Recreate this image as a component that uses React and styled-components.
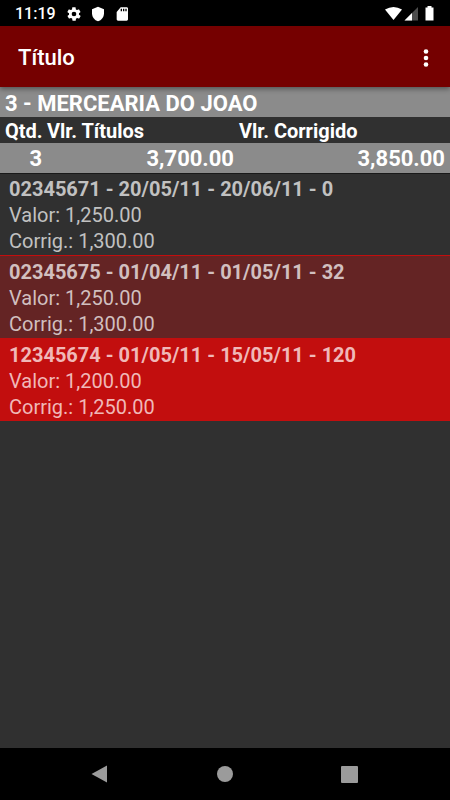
import React from 'react'
import styled, { createGlobalStyle } from 'styled-components'

const titles = [
  { id: '02345671', issued: '20/05/11', due: '20/06/11', days: 0, value: '1,250.00', corrected: '1,300.00', status: 'open' },
  { id: '02345675', issued: '01/04/11', due: '01/05/11', days: 32, value: '1,250.00', corrected: '1,300.00', status: 'late' },
  { id: '12345674', issued: '01/05/11', due: '15/05/11', days: 120, value: '1,200.00', corrected: '1,250.00', status: 'overdue' },
]

const rowColors = {
  open: { background: '#303030', text: '#c1c1c1' },
  late: { background: '#642424', text: '#d1bfbf' },
  overdue: { background: '#c20e0e', text: '#f0b8b8' },
}

function App() {
  return (
    <>
      <GlobalStyle />
      <Screen>
        <StatusBar>
          <StatusGroup>
            <Clock>11:19</Clock>
            <StatusIcon viewBox="0 0 24 24">
              <path d="M19.4 13c.04-.3.1-.6.1-1s-.03-.7-.1-1l2.1-1.6c.2-.2.3-.4.1-.7l-2-3.4c-.1-.2-.4-.3-.6-.2l-2.5 1c-.5-.4-1.1-.7-1.7-1l-.4-2.6c0-.3-.2-.5-.5-.5h-4c-.2 0-.4.2-.5.4l-.4 2.7c-.6.2-1.1.6-1.7 1l-2.5-1c-.2-.1-.5 0-.6.2l-2 3.4c-.1.3 0 .5.1.7L4.6 11c-.1.3-.1.7-.1 1s0 .7.1 1l-2.1 1.6c-.2.2-.3.4-.1.7l2 3.4c.1.2.4.3.6.2l2.5-1c.5.4 1.1.7 1.7 1l.4 2.6c0 .3.2.5.5.5h4c.2 0 .5-.2.5-.4l.4-2.7c.6-.2 1.1-.6 1.7-1l2.5 1c.2.1.5 0 .6-.2l2-3.4c.1-.2.1-.5-.1-.7zM12 15.5a3.5 3.5 0 1 1 0-7 3.5 3.5 0 0 1 0 7z" />
            </StatusIcon>
            <StatusIcon viewBox="0 0 24 24">
              <path d="M12 1 3 5v6c0 5.5 3.8 10.7 9 12 5.2-1.3 9-6.5 9-12V5z" />
            </StatusIcon>
            <StatusIcon viewBox="0 0 24 24">
              <path d="M19 2h-9L4 9v11c0 1.100.9 2 2 2h13c1.100 0 2-.9 2-2V4c0-1.100-.9-2-2-2zM12 8h-2V4h2zm3.500 0h-2V4h2zM19 8h-2V4h2z" />
            </StatusIcon>
          </StatusGroup>
          <SignalIcons viewBox="0 0 50 16" aria-hidden="true">
            <path d="M0 3.500Q8.500-1.500 17 3.500L8.500 14z" />
            <path d="M33 1v13.500H19.500z" opacity="0.3" />
            <path d="M27 7v7.500h-7.500z" />
            <path d="M42.500 0h4v1.500h2v13h-8v-13h2z" />
          </SignalIcons>
        </StatusBar>

        <AppBar>
          <h1>Título</h1>
          <MenuButton aria-label="Menu">
            <svg width="6" height="18" viewBox="0 0 6 18" aria-hidden="true">
              <circle cx="3" cy="2.500" r="2.300" />
              <circle cx="3" cy="9" r="2.300" />
              <circle cx="3" cy="15.500" r="2.300" />
            </svg>
          </MenuButton>
        </AppBar>

        <Content>
          <Customer>3 - MERCEARIA DO JOAO</Customer>
          <Summary>
            <thead>
              <tr>
                <th>Qtd.</th>
                <th>Vlr. Títulos</th>
                <th>Vlr. Corrigido</th>
              </tr>
            </thead>
            <tbody>
              <tr>
                <td>3</td>
                <td>3,700.00</td>
                <td>3,850.00</td>
              </tr>
            </tbody>
          </Summary>
          <TitleList>
            {titles.map((title) => (
              <TitleRow key={title.id} $status={title.status}>
                <strong>{`${title.id} - ${title.issued} - ${title.due} - ${title.days}`}</strong>
                <span>Valor: {title.value}</span>
                <span>Corrig.: {title.corrected}</span>
              </TitleRow>
            ))}
          </TitleList>
        </Content>

        <NavBar>
          <NavButton aria-label="Voltar">
            <svg width="18" height="18" viewBox="0 0 18 18"><path d="M.5 9 16 .5v17z" /></svg>
          </NavButton>
          <NavButton aria-label="Início">
            <svg width="18" height="18" viewBox="0 0 18 18"><circle cx="9" cy="9" r="8" /></svg>
          </NavButton>
          <NavButton aria-label="Recentes">
            <svg width="18" height="18" viewBox="0 0 18 18"><rect x="0" y="1" width="17" height="17" rx="1" /></svg>
          </NavButton>
        </NavBar>
      </Screen>
    </>
  )
}

export default App

const GlobalStyle = createGlobalStyle`
    * {
        box-sizing: border-box;
    }

    body {
        margin: 0;
        background: #303030;
        font-family: Roboto, "Liberation Sans", sans-serif;
    }
`

const Screen = styled.div`
    min-height: 100vh;
    display: flex;
    flex-direction: column;
    color: #fff;
`

const StatusBar = styled.div`
    height: 26px;
    padding: 1px 15px 0;
    display: flex;
    align-items: center;
    justify-content: space-between;
    background: #000;
`

const StatusGroup = styled.div`
    display: flex;
    align-items: center;
    gap: 8px;
`

const Clock = styled.span`
    margin-right: 2px;
    font-size: 16px;
    font-weight: 500;
    line-height: 26px;
`

const StatusIcon = styled.svg`
    width: 16px;
    height: 16px;
    fill: #fff;
`

const SignalIcons = styled.svg`
    width: 50px;
    height: 16px;
    fill: #fff;
`

const AppBar = styled.header`
    position: relative;
    height: 61px;
    padding: 2px 8px 0 18px;
    display: flex;
    align-items: center;
    justify-content: space-between;
    background: #750000;
    box-shadow: 0 2px 5px rgba(0, 0, 0, 0.4);

    h1 {
        margin: 0;
        font-size: 22px;
        font-weight: 500;
        line-height: 32px;
    }
`

const MenuButton = styled.button`
    width: 32px;
    height: 48px;
    padding: 0;
    display: flex;
    align-items: center;
    justify-content: center;
    border: 0;
    background: none;
    fill: #fff;
`

const Content = styled.main`
    flex: 1;
`

const Customer = styled.h2`
    margin: 0;
    padding: 3px 5px 0;
    background: #8b8b8b;
    font-size: 22px;
    font-weight: 700;
    line-height: 27px;
`

const Summary = styled.table`
    width: 100%;
    table-layout: fixed;
    border-collapse: collapse;

    th, td {
        font-weight: 700;
        white-space: nowrap;
    }

    th {
        height: 26px;
        padding: 2px 0 0 5px;
        font-size: 20px;
        line-height: 24px;
        text-align: left;
    }

    th:first-child {
        width: 42px;
    }

    th:last-child {
        width: 48%;
    }

    td {
        height: 30px;
        padding: 2px 0 0 5px;
        background: #8b8b8b;
        font-size: 22px;
        line-height: 28px;
        text-align: right;
    }

    td:last-child {
        padding-right: 5px;
    }
`

const TitleList = styled.ul`
    margin: 0;
    padding: 0;
    list-style: none;
`

const TitleRow = styled.li`
    padding: 3px 9px 1px;
    display: flex;
    flex-direction: column;
    background: ${(props) => rowColors[props.$status].background};
    color: ${(props) => rowColors[props.$status].text};
    font-size: 20px;
    line-height: 26px;

    & + & {
        border-top: 1px solid ${(props) => rowColors[props.$status].background};
    }

    &:first-child {
        box-shadow: inset 0 1px #191919;
    }
`

const NavBar = styled.nav`
    height: 52px;
    display: flex;
    align-items: center;
    justify-content: center;
    gap: 77px;
    background: #000;
`

const NavButton = styled.button`
    width: 48px;
    height: 48px;
    padding: 0;
    display: flex;
    align-items: center;
    justify-content: center;
    border: 0;
    background: none;
    fill: #9b9b9b;
`
